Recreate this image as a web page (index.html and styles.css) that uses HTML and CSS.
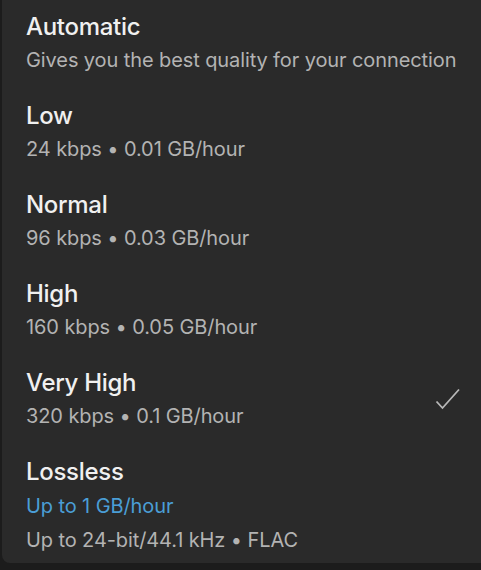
FILE: index.html
```html
<!DOCTYPE html>
<html lang="en">
<head>
    <meta charset="UTF-8">
    <meta name="viewport" content="width=device-width, initial-scale=1.0">
    <link rel="stylesheet" href="styles.css">
</head>
<body>
    <div class="sheet">
        <div class="option">
            <div class="text">
                <h3>Automatic</h3>
                <p>Gives you the best quality for your connection</p>
            </div>
        </div>
        <div class="option">
            <div class="text">
                <h3>Low</h3>
                <p>24 kbps • 0.01 GB/hour</p>
            </div>
        </div>
        <div class="option">
            <div class="text">
                <h3>Normal</h3>
                <p>96 kbps • 0.03 GB/hour</p>
            </div>
        </div>
        <div class="option">
            <div class="text">
                <h3>High</h3>
                <p>160 kbps • 0.05 GB/hour</p>
            </div>
        </div>
        <div class="option selected">
            <div class="text">
                <h3>Very High</h3>
                <p>320 kbps • 0.1 GB/hour</p>
            </div>
            <svg class="check" width="26" height="22" viewBox="0 0 26 22">
                <path d="M1.5 13.5 L7.5 20 L24 1.5" fill="none" stroke="#b8b8b8" stroke-width="1.8"/>
            </svg>
        </div>
        <div class="option">
            <div class="text">
                <h3>Lossless</h3>
                <p class="accent">Up to 1 GB/hour</p>
                <p>Up to 24-bit/44.1 kHz • FLAC</p>
            </div>
        </div>
    </div>
</body>
</html>
```

FILE: styles.css
```css
body {
    margin: 0;
    padding: 0;
    background-color: #1c1c1c;
    font-family: 'Inter', 'Noto Sans', sans-serif;
}
.sheet {
    width: 481px;
    height: 563px;
    background: #2a2a2a;
    border-radius: 0 0 0 8px;
    margin-left: 2px;
    padding-top: 12px;
    box-sizing: border-box;
}
.option {
    display: flex;
    align-items: center;
    justify-content: space-between;
    padding: 0 22px 0 24px;
    margin-bottom: 27px;
}
.text h3 {
    margin: 0;
    font-size: 24px;
    font-weight: 500;
    letter-spacing: -0.3px;
    color: #f0f0f0;
    line-height: 30px;
}
.text p {
    margin: 4px 0 0;
    font-size: 20px;
    letter-spacing: -0.1px;
    color: #b3b3b3;
    line-height: 28px;
}
.text p.accent {
    color: #4a9ed6;
    margin-top: 5px;
}
.text p.accent + p {
    margin-top: 6px;
}
```
